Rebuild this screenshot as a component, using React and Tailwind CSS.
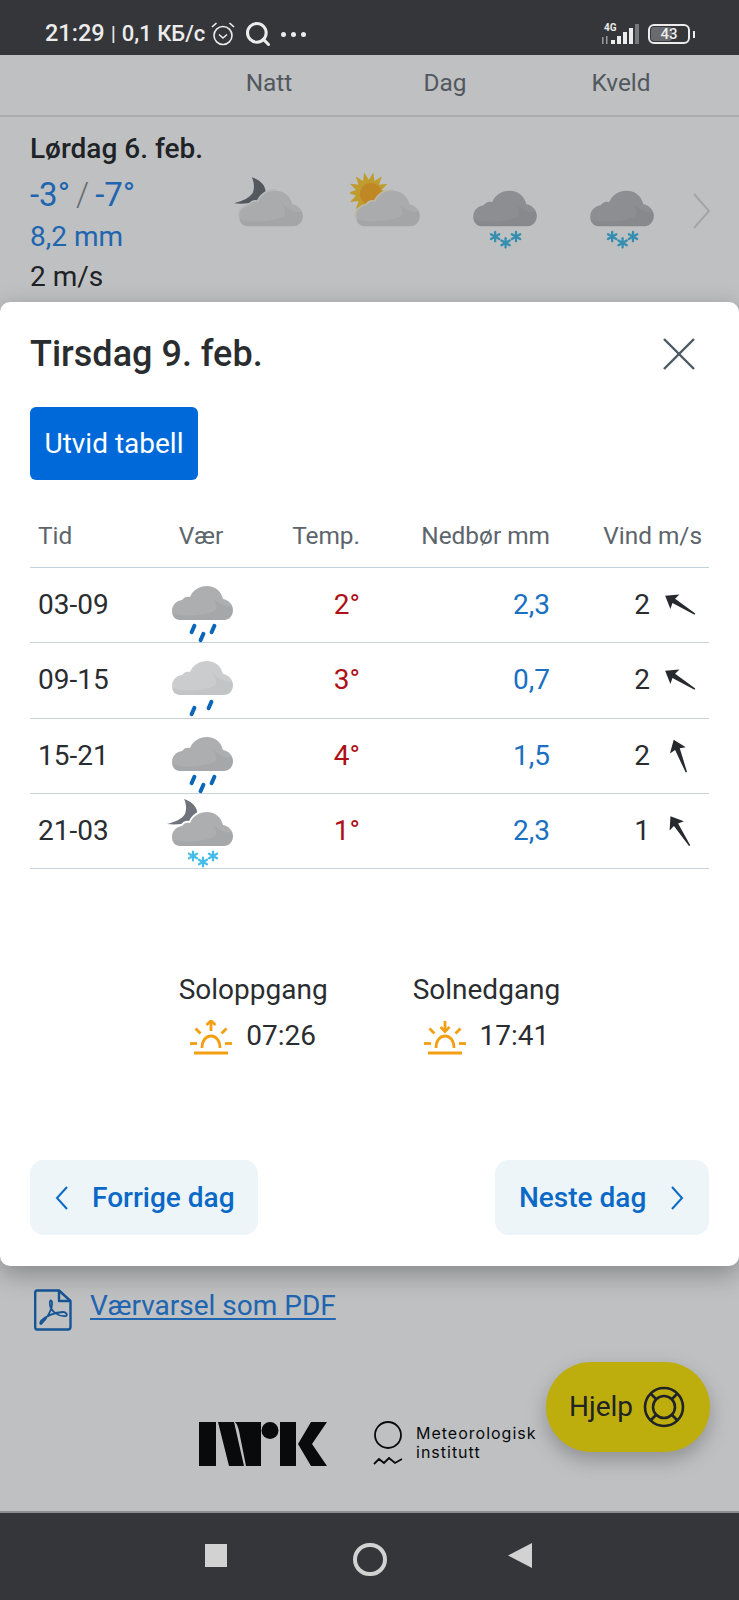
import { Search } from 'lucide-react'

const ROWS = [
  { time: '03-09', icon: 'rain3', tone: '#adaeb0', temp: '2°', rain: '2,3', wind: '2', deg: -58 },
  { time: '09-15', icon: 'rain2', tone: '#cbccce', temp: '3°', rain: '0,7', wind: '2', deg: -58 },
  { time: '15-21', icon: 'rain3', tone: '#adaeb0', temp: '4°', rain: '1,5', wind: '2', deg: -21 },
  { time: '21-03', icon: 'moonSnow', tone: '#adaeb0', temp: '1°', rain: '2,3', wind: '1', deg: -33 },
]

const CLOUD = 'M8 34C3 34 0 30 0 25C0 19 4 15 10 14C12 11 15 10 18 11C21 4 27 0 35 0C43 0 49 5 51 13C57 14 61 19 61 24C61 30 57 34 52 34Z'
const CLOUD_EDGE = 'M0 25C0 19 4 15 10 14C12 11 15 10 18 11C21 4 27 0 35 0'

function Flake({ x, y, color }) {
  return (
    <g stroke={color} strokeWidth="2.2" strokeLinecap="round">
      <line x1={x} y1={y - 4.5} x2={x} y2={y + 4.5} />
      <line x1={x - 4} y1={y - 2.3} x2={x + 4} y2={y + 2.3} />
      <line x1={x - 4} y1={y + 2.3} x2={x + 4} y2={y - 2.3} />
    </g>
  )
}

function Drop({ x, y }) {
  return <line x1={x - 1.4} y1={y + 3.2} x2={x + 1.4} y2={y - 3.2} stroke="#0a66b8" strokeWidth="4" strokeLinecap="round" />
}

function sunPoints(cx, cy, outer, inner, n) {
  const pts = []
  for (let i = 0; i < n * 2; i++) {
    const r = i % 2 ? inner : outer
    const a = (Math.PI * i) / n
    pts.push(`${cx + r * Math.cos(a)},${cy + r * Math.sin(a)}`)
  }
  return pts.join(' ')
}

function Weather({ kind, tone = '#adaeb0', halo = '#ffffff', width = 70, snow = '#45bde8' }) {
  const height = (width * 75) / 70
  return (
    <svg width={width} height={height} viewBox="0 0 70 75">
      {(kind === 'moon' || kind === 'moonSnow') && (
        <path d="M18 5C27 8 32 14 31 20C30 27 16 32 1 30C9 28 16 25 19 20C21 15 20 9 18 5Z" fill="#6f747c" />
      )}
      {kind === 'sun' && (
        <g>
          <polygon points={sunPoints(18, 20, 20, 12.5, 14)} fill="#ffcf3a" />
          <circle cx="20" cy="21" r="10.5" fill="#ffb52e" />
        </g>
      )}
      <g transform="translate(6 18)">
        {(kind === 'moon' || kind === 'moonSnow' || kind === 'sun') && (
          <path d={CLOUD_EDGE} fill="none" stroke={halo} strokeWidth="3.5" />
        )}
        <path d={CLOUD} fill={tone} />
        <path d="M40 12C46 16 52 22 60 20C61 22 61 23 61 24C61 30 57 34 52 34H8C4 34 1 31 0 27C12 31 30 30 42 25C46 23 44 16 40 12Z" fill="#000000" opacity="0.035" />
      </g>
      {kind === 'rain3' && (
        <g>
          <Drop x={27} y={61} />
          <Drop x={36} y={69} />
          <Drop x={47} y={61} />
        </g>
      )}
      {kind === 'rain2' && (
        <g>
          <Drop x={27} y={68} />
          <Drop x={44} y={62} />
        </g>
      )}
      {(kind === 'snow' || kind === 'moonSnow') && (
        <g>
          <Flake x={27} y={62} color={snow} />
          <Flake x={37} y={68} color={snow} />
          <Flake x={47} y={62} color={snow} />
        </g>
      )}
    </svg>
  )
}

function WindArrow({ deg }) {
  return (
    <svg width="40" height="40" viewBox="0 0 40 40" className="ml-[10px]">
      <polygon
        points="20,2.5 28.5,14 22.6,12.6 20.8,37.5 19.4,37.5 17.6,12.6 11.5,14"
        fill="#262a2e"
        transform={`rotate(${deg} 20 20)`}
      />
    </svg>
  )
}

function SunIcon({ down }) {
  return (
    <svg width="42" height="35" viewBox="0 0 42 35" fill="none" stroke="#f29f14" strokeWidth="2.8" className="mt-[3px]">
      <line x1="4" y1="33" x2="38" y2="33" />
      <path d="M12 28C12 21 15.5 16 21 16C26.5 16 30 21 30 28" />
      <line x1="0" y1="23.5" x2="7" y2="23.5" />
      <line x1="35" y1="23.5" x2="42" y2="23.5" />
      <line x1="5.5" y1="8.5" x2="10.5" y2="13.5" />
      <line x1="36.5" y1="8.5" x2="31.5" y2="13.5" />
      <line x1="21" y1="1" x2="21" y2="11" />
      {down ? <polyline points="16.5,7 21,11.5 25.5,7" /> : <polyline points="16.5,5 21,0.8 25.5,5" />}
    </svg>
  )
}

function Chevron({ left, className, color = '#0a69c7' }) {
  return (
    <svg width="14" height="24" viewBox="0 0 14 24" fill="none" stroke={color} strokeWidth="2" className={className}>
      <polyline points={left ? '12,1 2,12 12,23' : '2,1 12,12 2,23'} />
    </svg>
  )
}

function StatusBar() {
  return (
    <div className="relative z-20 h-[55px] shrink-0 bg-[#35363a] text-[#ececec] flex items-center justify-between pl-[45px] pr-[44px] pt-[13px] font-['Roboto',sans-serif]">
      <div className="flex items-center">
        <span className="text-[23.5px] font-medium leading-none">21:29</span>
        <span className="text-[21px] leading-none mx-[6px]">|</span>
        <span className="text-[22px] font-medium leading-none">0,1 КБ/с</span>
        <svg width="26" height="26" viewBox="0 0 26 26" fill="none" stroke="#ececec" strokeWidth="1.6" className="ml-[5px]">
          <circle cx="13" cy="14.5" r="9" />
          <polyline points="9,13.5 13,17 17,13.5" />
          <line x1="2" y1="6" x2="6.5" y2="2" />
          <line x1="24" y1="6" x2="19.5" y2="2" />
        </svg>
        <Search size={28} strokeWidth={2.6} color="#ececec" className="ml-[8px]" />
        <div className="flex gap-[5px] ml-[9px]">
          <span className="w-[5px] h-[5px] rounded-full bg-[#ececec]" />
          <span className="w-[5px] h-[5px] rounded-full bg-[#ececec]" />
          <span className="w-[5px] h-[5px] rounded-full bg-[#ececec]" />
        </div>
      </div>
      <div className="flex items-center">
        <div className="relative w-[40px] h-[22px]">
          <span className="absolute left-[2px] top-0 text-[10px] font-bold leading-none">4G</span>
          <svg width="40" height="22" viewBox="0 0 40 22" className="absolute left-0 top-0">
            <rect x="0" y="14" width="1.5" height="7" fill="#9a9a9a" />
            <rect x="4" y="13" width="1.5" height="8" fill="#9a9a9a" />
            <rect x="9" y="17" width="4" height="4" fill="#ececec" />
            <rect x="15" y="13" width="4" height="8" fill="#ececec" />
            <rect x="21" y="9" width="4" height="12" fill="#ececec" />
            <rect x="27" y="5" width="4" height="16" fill="#ececec" />
            <rect x="33" y="1" width="4" height="20" fill="#77787b" />
          </svg>
        </div>
        <div className="relative ml-[6px] w-[42px] h-[20px] rounded-[6px] border-2 border-[#ececec] overflow-hidden flex items-center justify-center">
          <div className="absolute left-[1px] top-[1px] bottom-[1px] w-[21px] rounded-[3px] bg-[#6a6b6e]" />
          <span className="relative text-[15px] font-medium leading-none">43</span>
        </div>
        <span className="ml-[3px] w-[2px] h-[7px] bg-[#ececec]" />
      </div>
    </div>
  )
}

function NavBar() {
  return (
    <div className="relative z-20 h-[89px] shrink-0 bg-[#35363a] border-t-2 border-[#8b8c8e] flex items-start pt-[31px] pl-[205px]">
      <div className="w-[22px] h-[23px] bg-[#d2d2d2]" />
      <div className="ml-[126px] -mt-[1px] w-[34px] h-[33px] rounded-full border-[4px] border-[#d2d2d2]" />
      <svg width="24" height="25" viewBox="0 0 24 25" className="ml-[121px] -mt-[1px]">
        <polygon points="24,0 24,25 0,12.5" fill="#d2d2d2" />
      </svg>
    </div>
  )
}

function NrkLogo() {
  return (
    <svg width="128" height="44" viewBox="0 0 128 44" fill="#0b0c0e">
      <rect x="0" y="0" width="17" height="44" />
      <polygon points="19,0 35,0 45,44 30,44" />
      <path d="M36 0H62V44H47L41 14C40 8 39 3 36 0Z" />
      <circle cx="71" cy="8.5" r="8.5" />
      <rect x="81" y="0" width="16" height="44" />
      <polygon points="99,22 112,0 128,0 113,22 128,44 112,44" />
    </svg>
  )
}

function Modal() {
  return (
    <div className="absolute z-30 left-0 right-0 top-[302px] h-[964px] bg-white rounded-[10px] shadow-[0_8px_26px_rgba(0,0,0,0.3)] px-[30px] pb-[31px] flex flex-col">
      <div className="flex items-center justify-between h-[40px] mt-[32px]">
        <h2 className="text-[36px] font-medium leading-none text-[#2a2d30]">Tirsdag 9. feb.</h2>
        <svg width="34" height="34" viewBox="0 0 34 34" stroke="#4d5a63" strokeWidth="2.4" className="mr-[13px]">
          <line x1="2" y1="2" x2="32" y2="32" />
          <line x1="32" y1="2" x2="2" y2="32" />
        </svg>
      </div>

      <button type="button" className="mt-[33px] w-[168px] h-[73px] rounded-[6px] bg-[#0069da] text-white text-[28px]">
        Utvid tabell
      </button>

      <div className="mt-[37px] h-[51px] pb-[11px] grid grid-cols-[106px_130px_102px_190px_152px] items-center border-b border-[#c3d3da] text-[24.4px] text-[#5c656c]">
        <div className="pl-[8px]">Tid</div>
        <div className="text-center">Vær</div>
        <div className="text-right pr-[8px]">Temp.</div>
        <div className="text-right pr-[8px]">Nedbør mm</div>
        <div className="text-right pr-[8px]">Vind m/s</div>
      </div>

      {ROWS.map((r) => (
        <div key={r.time} className="h-[75.25px] grid grid-cols-[106px_130px_102px_190px_152px] items-center border-b border-[#cad3d7] text-[28px]">
          <div className="pl-[8px] text-[#2a2d30]">{r.time}</div>
          <div className="flex justify-center h-[74px] overflow-visible">
            <Weather kind={r.icon} tone={r.tone} />
          </div>
          <div className="text-right pr-[8px] text-[#ad1016]">{r.temp}</div>
          <div className="text-right pr-[8px] text-[#1a70c2]">{r.rain}</div>
          <div className="flex items-center justify-end pr-[10px] text-[#2a2d30]">
            <span>{r.wind}</span>
            <WindArrow deg={r.deg} />
          </div>
        </div>
      ))}

      <div className="mt-[103px] flex justify-center gap-[85px] text-[#2a2d30] text-[28px]">
        <div className="flex flex-col items-center">
          <div className="leading-[36px]">Soloppgang</div>
          <div className="mt-[10px] h-[36px] flex items-center gap-[14px]">
            <SunIcon />
            <span>07:26</span>
          </div>
        </div>
        <div className="flex flex-col items-center">
          <div className="leading-[36px]">Solnedgang</div>
          <div className="mt-[10px] h-[36px] flex items-center gap-[14px]">
            <SunIcon down />
            <span>17:41</span>
          </div>
        </div>
      </div>

      <div className="mt-auto flex justify-between">
        <button type="button" className="w-[228px] h-[75px] rounded-[14px] bg-[#edf5f8] flex items-center pl-[25px] text-[28px] font-medium text-[#0a69c7]">
          <Chevron left />
          <span className="ml-[23px]">Forrige dag</span>
        </button>
        <button type="button" className="w-[214px] h-[75px] rounded-[14px] bg-[#edf5f8] flex items-center pl-[24px] text-[28px] font-medium text-[#0a69c7]">
          <span>Neste dag</span>
          <Chevron className="ml-[24px]" />
        </button>
      </div>
    </div>
  )
}

export default function App() {
  return (
    <div className="relative w-[739px] h-[1600px] overflow-hidden bg-white flex flex-col font-['Roboto',sans-serif]">
      <StatusBar />

      <main className="flex-1 flex flex-col">
        <div className="h-[62px] shrink-0 border-b-2 border-[#e1e4e7] pl-[181px] pb-[3px] flex items-center text-[24.4px] text-[#6e757c]">
          <div className="w-[176px] text-center">Natt</div>
          <div className="w-[176px] text-center">Dag</div>
          <div className="w-[176px] text-center">Kveld</div>
        </div>

        <div className="flex pl-[30px]">
          <div className="w-[181px] pt-[14px]">
            <div className="text-[28px] leading-[36px] font-medium text-[#2a2d30] whitespace-nowrap">Lørdag 6. feb.</div>
            <div className="mt-[6px] h-[44px] flex items-center text-[33px] text-[#2b86e8]">
              <span>-3°</span>
              <span className="mx-[6px] font-light text-[#8a8f94]">/</span>
              <span>-7°</span>
            </div>
            <div className="mt-[2px] text-[28px] leading-[36px] text-[#2b86e8]">8,2 mm</div>
            <div className="mt-[4px] text-[28px] leading-[36px] text-[#2a2d30]">2 m/s</div>
          </div>
          <div className="flex pt-[55px]">
            <div className="w-[117px] flex justify-center"><Weather kind="moon" tone="#e2e3e5" halo="#f4f4f5" width={73} /></div>
            <div className="w-[117px] flex justify-center"><Weather kind="sun" tone="#e2e3e5" halo="#fbf3dc" width={73} /></div>
            <div className="w-[117px] flex justify-center"><Weather kind="snow" tone="#bcbdbf" width={73} /></div>
            <div className="w-[117px] flex justify-center"><Weather kind="snow" tone="#bcbdbf" width={73} /></div>
            <div className="pt-[21px] ml-[14px]">
              <svg width="18" height="36" viewBox="0 0 18 36" fill="none" stroke="#dadcde" strokeWidth="2">
                <polyline points="1,1 16,18 1,35" />
              </svg>
            </div>
          </div>
        </div>

        <div className="mt-auto pb-[44px]">
          <div className="flex items-center pl-[34px]">
            <svg width="38" height="42" viewBox="0 0 38 42" fill="none" stroke="#1d6fc4" strokeWidth="2.4" strokeLinejoin="round">
              <path d="M3 1.5H25L36.5 12V38C36.5 39.5 35.5 40.5 34 40.5H3C2 40.5 1.2 39.5 1.2 38V3.5C1.2 2.3 2 1.5 3 1.5Z" />
              <path d="M25 1.5V12H36.5" />
              <path strokeWidth="1.8" d="M7 35C12 31 19 20 18 13C17 10 15 12 16 16C17 22 24 28 32 27C34 26 32 23 29 23C21 23 12 27 7 32C6 34 6 35 7 35Z" />
            </svg>
            <a className="ml-[18px] mb-[8px] text-[28px] leading-[36px] text-[#2b86e8] underline decoration-2 underline-offset-[3px]">Værvarsel som PDF</a>
          </div>

          <div className="mt-[90px] flex items-start pl-[199px]">
            <NrkLogo />
            <svg width="30" height="46" viewBox="0 0 30 46" fill="none" stroke="#0b0c0e" strokeWidth="1.8" className="ml-[46px] -mt-[1px]">
              <circle cx="15" cy="14" r="13" />
              <polyline points="1,43 6,38 11,42 16,37 22,42 29,38" />
            </svg>
            <div className="ml-[13px] mt-[2px] text-[16px] leading-[19px] tracking-[1px] text-[#0b0c0e] font-['Inter',sans-serif]">
              Meteorologisk
              <br />
              institutt
            </div>
          </div>
        </div>
      </main>

      <NavBar />

      <div className="absolute z-10 inset-0 bg-[#000308]/25 pointer-events-none" />

      <button type="button" className="absolute z-[5] left-[546px] top-[1362px] w-[164px] h-[90px] rounded-[45px] bg-[#fde70f] shadow-[0_8px_20px_rgba(0,0,0,0.25)] flex items-center pl-[23px] text-[28px] text-[#2a2d30]">
        <span>Hjelp</span>
        <svg width="42" height="42" viewBox="0 0 42 42" fill="none" stroke="#2a2d30" strokeWidth="2.6" className="ml-[10px]">
          <circle cx="21" cy="21" r="19" />
          <circle cx="21" cy="21" r="11" />
          <line x1="13" y1="13" x2="7.5" y2="7.5" />
          <line x1="29" y1="13" x2="34.5" y2="7.5" />
          <line x1="13" y1="29" x2="7.5" y2="34.5" />
          <line x1="29" y1="29" x2="34.5" y2="34.5" />
        </svg>
      </button>

      <Modal />
    </div>
  )
}
